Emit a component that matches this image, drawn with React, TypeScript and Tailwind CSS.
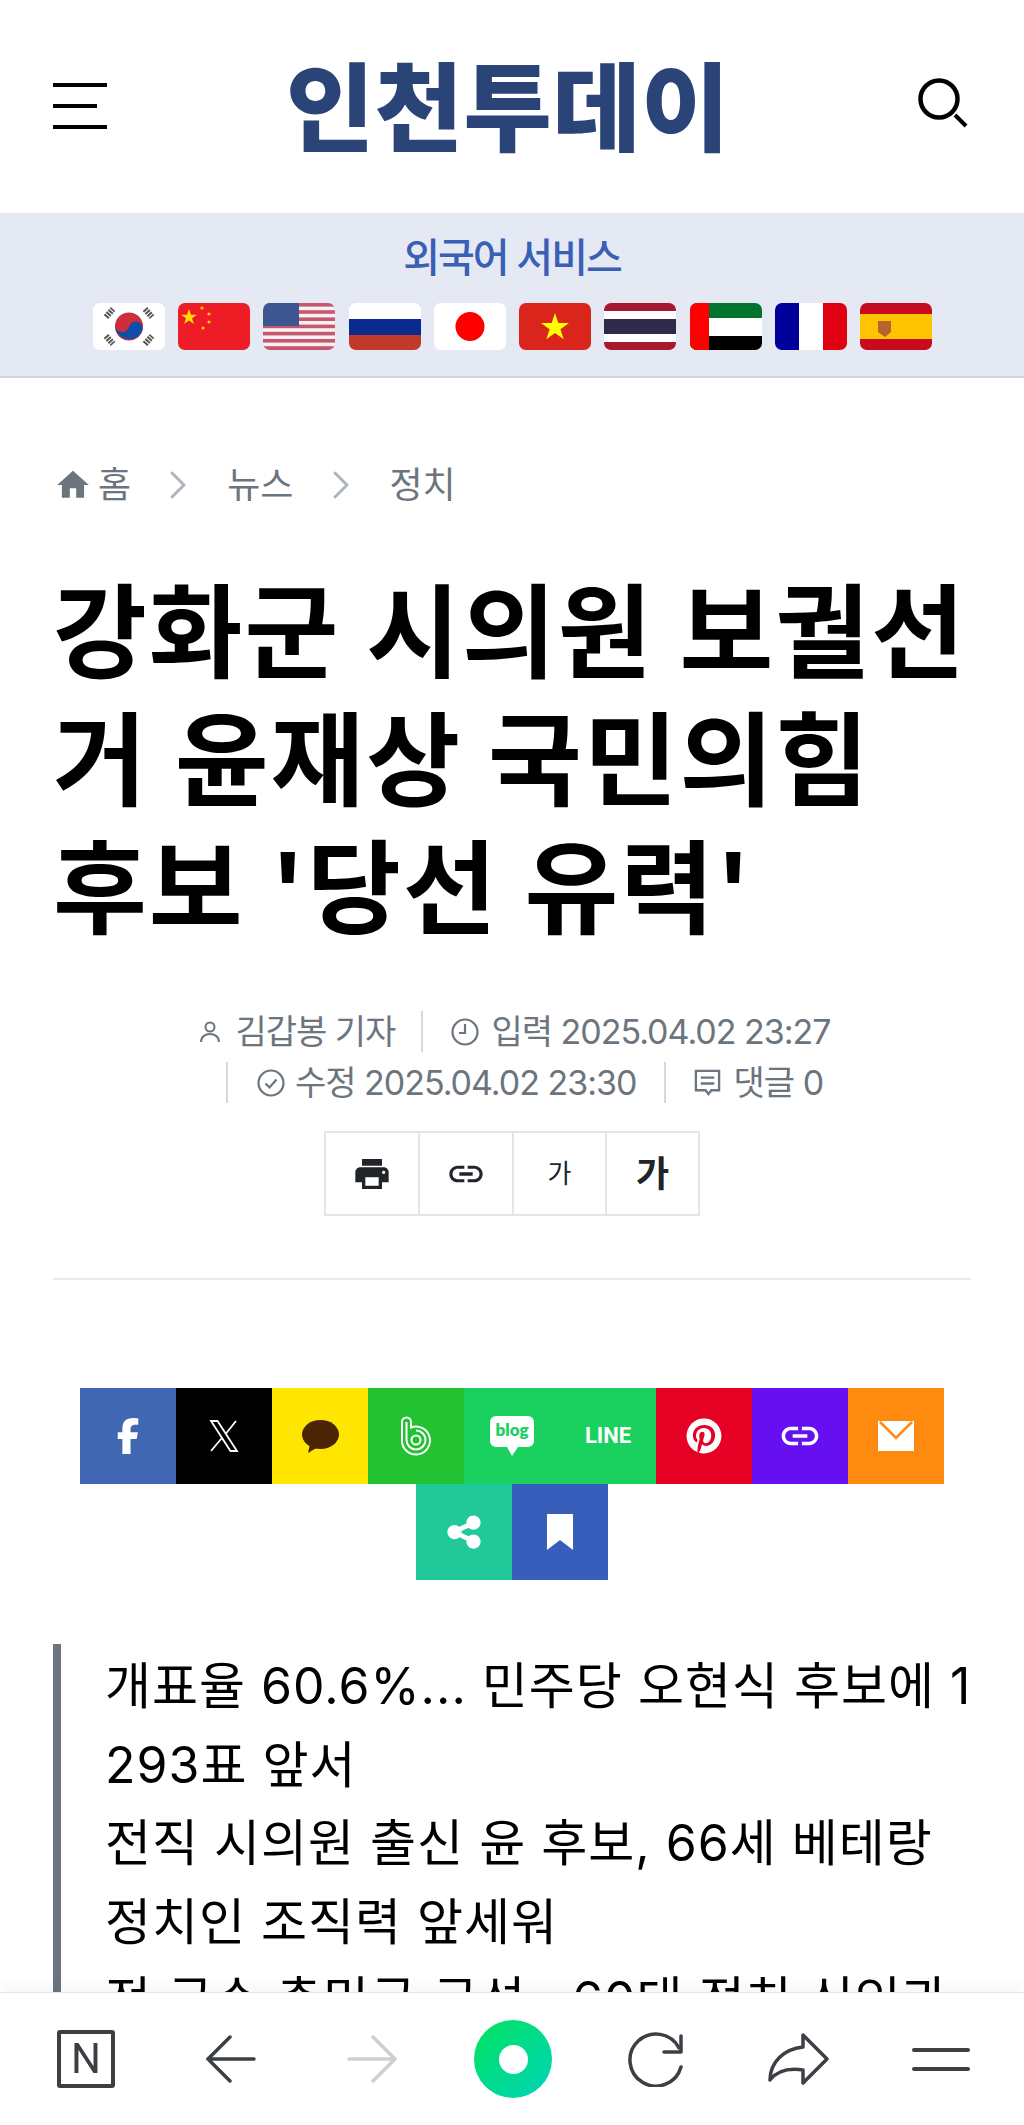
import { FaFacebookF, FaPinterest, FaShareNodes } from "react-icons/fa6";
import { MdLink, MdPrint, MdHome } from "react-icons/md";
import { ChevronRight } from "lucide-react";

const KR = "font-['Inter','Noto_Sans_CJK_KR','Noto_Sans',sans-serif]";

function Flag({ children }: { children: React.ReactNode }) {
  return (
    <svg viewBox="0 0 72 47" className="w-[72px] h-[47px] rounded-[7px] shrink-0">
      {children}
    </svg>
  );
}

function Flags() {
  return (
    <div className="flex justify-center gap-[13.3px] ml-[1px]">
      {/* korea */}
      <Flag>
        <rect width="72" height="47" fill="#fff" />
        <circle cx="36" cy="23.5" r="14" fill="#cd2e3a" />
        <path d="M22.500 20a14 14 0 0 0 27 7 6.800 6.800 0 0 0-13.500-3 6.800 6.800 0 0 1-13.500-4z" fill="#0f4ea8" />
        <g stroke="#555" strokeWidth="6" strokeDasharray="2 1">
          <path d="M13 14l7-8M52 6l7 8M13 33l7 8M52 41l7-8" />
        </g>
      </Flag>
      {/* china */}
      <Flag>
        <rect width="72" height="47" fill="#ee1c25" />
        <path d="M11 6l1.900 5.700h6l-4.900 3.600 1.900 5.700-4.900-3.500-4.900 3.500 1.900-5.700-4.900-3.600h6z" fill="#ffde00" />
        <g fill="#ffc800">
          <circle cx="24" cy="5" r="1.600" />
          <circle cx="31" cy="11" r="1.600" />
          <circle cx="31" cy="19" r="1.600" />
          <circle cx="25" cy="25" r="1.600" />
        </g>
      </Flag>
      {/* usa */}
      <Flag>
        <rect width="72" height="47" fill="#f5f0f2" />
        <g fill="#c7576f">
          <rect y="0" width="72" height="3.600" />
          <rect y="7.200" width="72" height="3.600" />
          <rect y="14.400" width="72" height="3.600" />
          <rect y="21.600" width="72" height="3.600" />
          <rect y="28.800" width="72" height="3.600" />
          <rect y="36" width="72" height="3.600" />
          <rect y="43.200" width="72" height="3.800" />
        </g>
        <rect width="36" height="23" fill="#3d5691" />
      </Flag>
      {/* russia */}
      <Flag>
        <rect width="72" height="16" fill="#fff" />
        <rect y="16" width="72" height="16" fill="#0b2a8f" />
        <rect y="32" width="72" height="15" fill="#c0392b" />
      </Flag>
      {/* japan */}
      <Flag>
        <rect width="72" height="47" fill="#fff" />
        <circle cx="36" cy="23.500" r="14.500" fill="#f00" />
      </Flag>
      {/* vietnam */}
      <Flag>
        <rect width="72" height="47" fill="#da251d" />
        <path d="M36 10l3.300 10h10.700l-8.600 6.200 3.300 10.100-8.700-6.200-8.700 6.200 3.300-10.100-8.600-6.200h10.700z" fill="#ff0" />
      </Flag>
      {/* thailand */}
      <Flag>
        <rect width="72" height="47" fill="#fff" />
        <rect width="72" height="8" fill="#a51931" />
        <rect y="16" width="72" height="15" fill="#2d2a4a" />
        <rect y="39" width="72" height="8" fill="#a51931" />
      </Flag>
      {/* uae */}
      <Flag>
        <rect width="72" height="15" fill="#00732f" />
        <rect y="15" width="72" height="18" fill="#fff" />
        <rect y="33" width="72" height="14" fill="#000" />
        <rect width="19" height="47" fill="#f00" />
      </Flag>
      {/* france */}
      <Flag>
        <rect width="24" height="47" fill="#00009a" />
        <rect x="24" width="24" height="47" fill="#fff" />
        <rect x="48" width="24" height="47" fill="#e1000f" />
      </Flag>
      {/* spain */}
      <Flag>
        <rect width="72" height="47" fill="#c60b1e" />
        <rect y="11" width="72" height="25" fill="#ffc400" />
        <path d="M18 18h13v11l-6 5-7-5z" fill="#b8632f" />
      </Flag>
    </div>
  );
}

function MetaDivider() {
  return <span className="w-[2px] h-[41px] bg-[#d5d8dc] shrink-0" />;
}

function ShareCell({ color, children }: { color: string; children: React.ReactNode }) {
  return <div className={`w-[96px] h-[96px] flex items-center justify-center text-white ${color}`}>{children}</div>;
}

export default function App() {
  return (
    <div className={`relative h-[2125px] overflow-hidden bg-white text-black ${KR}`}>
      {/* Header */}
      <header className="h-[213px] flex items-center justify-between pl-[53px] pr-[56px]">
        <div className="flex flex-col w-[54px] gap-[17px] -mt-[1px]">
          <span className="h-1 w-full bg-black" />
          <span className="h-1 w-[44px] bg-black" />
          <span className="h-1 w-full bg-black" />
        </div>
        <div className="text-[#2b4478] text-[96px] leading-none font-black tracking-[0.500px] mt-[2px] mr-[9px]">인천투데이</div>
        <svg viewBox="0 0 50 50" className="w-[50px] h-[50px] -mt-[7px]" fill="none" stroke="#000">
          <circle cx="21" cy="21" r="18.500" strokeWidth="4.500" />
          <path d="M37 37l11 11" strokeWidth="4" />
        </svg>
      </header>

      {/* Foreign language band */}
      <section className="h-[165px] bg-[#e5e9f4] border-b-2 border-[#d4d6da] flex flex-col items-center pt-[24px]">
        <div className="text-[#3a60b5] text-[40px] leading-[42px] font-medium tracking-[-2px]">외국어 서비스</div>
        <div className="mt-[24px]">
          <Flags />
        </div>
      </section>

      <main className="px-[53px]">
        {/* Breadcrumb */}
        <nav className="flex items-center h-[48px] mt-[83px] text-[#6c757d] text-[36px]">
          <MdHome className="w-[38px] h-[38px] ml-[1px] mr-[6px]" />
          <span>홈</span>
          <ChevronRight className="w-[48px] h-[48px] ml-[23px] mr-[25px] text-[#adb5bd]" strokeWidth={1.500} />
          <span>뉴스</span>
          <ChevronRight className="w-[48px] h-[48px] ml-[24px] mr-[24px] text-[#adb5bd]" strokeWidth={1.500} />
          <span>정치</span>
        </nav>

        {/* Title */}
        <h1 className="mt-[60px] text-[102px] leading-[128px] font-bold break-all tracking-[1.900px]">
          강화군 시의원 보궐선거 윤재상 국민의힘 후보 '당선 유력'
        </h1>

        {/* Meta */}
        <div className="mt-[53px] text-[#6c757d] text-[34px] tracking-[-1px]">
          <div className="flex items-center justify-center h-[51px] ml-[5px]">
            <svg viewBox="0 0 24 24" className="w-[24px] h-[24px] mr-[13px]" fill="none" stroke="currentColor" strokeWidth="2">
              <circle cx="12" cy="7" r="4.500" />
              <path d="M3 22c0-5 4-8 9-8s9 3 9 8" />
            </svg>
            <span>김갑봉 기자</span>
            <span className="ml-[26px] mr-[28px] flex"><MetaDivider /></span>
            <svg viewBox="0 0 28 28" className="w-[28px] h-[28px] mr-[12px]" fill="none" stroke="currentColor" strokeWidth="2.200">
              <circle cx="14" cy="14" r="12.500" />
              <path d="M14 6v9H8" />
            </svg>
            <span>입력 2025.04.02 23:27</span>
          </div>
          <div className="flex items-center justify-center h-[51px] ml-[25px]">
            <MetaDivider />
            <svg viewBox="0 0 28 28" className="w-[28px] h-[28px] ml-[29px] mr-[10px]" fill="none" stroke="currentColor" strokeWidth="2.200">
              <circle cx="14" cy="14" r="12.500" />
              <path d="M8.500 14.500l4 4 7-8" />
            </svg>
            <span>수정 2025.04.02 23:30</span>
            <span className="ml-[27px] mr-[27px] flex"><MetaDivider /></span>
            <svg viewBox="0 0 30 30" className="w-[29px] h-[29px] mr-[12px]" fill="none" stroke="currentColor" strokeWidth="2.400">
              <path d="M3 3h24v20H19l-3 4-3-4H3z" />
              <path d="M8 10h14M8 16h14" />
            </svg>
            <span>댓글 0</span>
          </div>
        </div>

        {/* Tools */}
        <div className="mt-[23px] flex justify-center">
          <div className="flex h-[85px] border-2 border-[#e5e5e5] text-[#212529]">
            <div className="w-[92px] flex items-center justify-center">
              <MdPrint className="w-[40px] h-[40px]" />
            </div>
            <div className="w-[94px] flex items-center justify-center border-l-2 border-[#e5e5e5]">
              <MdLink className="w-[40px] h-[40px]" />
            </div>
            <div className="w-[93px] flex items-center justify-center border-l-2 border-[#e5e5e5] text-[26px]">가</div>
            <div className="w-[93px] flex items-center justify-center border-l-2 border-[#e5e5e5] text-[36px] font-bold">가</div>
          </div>
        </div>

        <div className="mt-[62px] border-t-2 border-[#e9ecef]" />

        {/* Share buttons */}
        <div className="mt-[108px] mx-[26px] flex flex-wrap justify-center">
          <ShareCell color="bg-[#4267b2]"><FaFacebookF className="w-[24px] h-[36px]" /></ShareCell>
          <ShareCell color="bg-black">
            <svg viewBox="0 0 30 32" className="w-[30px] h-[32px]" fill="none" stroke="#fff" strokeWidth="1.800">
              <path d="M2 1h6.500L28 31h-6.500z" />
              <path d="M27 1L17 13.500M12.500 18.500L2 31" />
            </svg>
          </ShareCell>
          <ShareCell color="bg-[#ffe600]">
            <svg viewBox="0 0 37 33" className="w-[37px] h-[33px]">
              <ellipse cx="18.500" cy="14.500" rx="18.500" ry="14.500" fill="#4a2403" />
              <path d="M8 24L6 33l10-6z" fill="#4a2403" />
            </svg>
          </ShareCell>
          <ShareCell color="bg-[#22c232]">
            <svg viewBox="0 0 32 40" className="w-[32px] h-[40px]" fill="none" stroke="#fff" strokeWidth="2">
              <path d="M2 24V6a4.500 4.500 0 0 1 9 0v5.500A14 14 0 1 1 2 24z" />
              <path d="M6.500 6v18a9.500 9.500 0 1 0 9.500-9.500" />
              <circle cx="16" cy="24" r="4.500" />
            </svg>
          </ShareCell>
          <ShareCell color="bg-[#1ad15f]">
            <svg viewBox="0 0 44 40" className="w-[44px] h-[40px]">
              <path d="M6 0h32a6 6 0 0 1 6 6v19a6 6 0 0 1-6 6H28l-6 9-5-9H6a6 6 0 0 1-6-6V6a6 6 0 0 1 6-6z" fill="#fff" />
              <text x="22" y="20" textAnchor="middle" fontSize="17" fontWeight="800" fill="#1ad15f" fontFamily="Lato, sans-serif">blog</text>
            </svg>
          </ShareCell>
          <ShareCell color="bg-[#1ad15f]">
            <span className="font-['Roboto',sans-serif] text-[22px] font-bold leading-none">LINE</span>
          </ShareCell>
          <ShareCell color="bg-[#e60023]"><FaPinterest className="w-[36px] h-[36px]" /></ShareCell>
          <ShareCell color="bg-[#6610f2]"><MdLink className="w-[44px] h-[44px]" /></ShareCell>
          <ShareCell color="bg-[#ff8a10]">
            <svg viewBox="0 0 36 30" className="w-[36px] h-[30px]">
              <rect width="36" height="30" fill="#fff" />
              <path d="M2 1l16 16L34 1" fill="none" stroke="#ff8a10" strokeWidth="2.500" />
            </svg>
          </ShareCell>
          <ShareCell color="bg-[#20c997]"><FaShareNodes className="w-[38px] h-[38px]" /></ShareCell>
          <ShareCell color="bg-[#385ebb]">
            <svg viewBox="0 0 26 36" className="w-[26px] h-[36px]">
              <path d="M0 0h26v36L13 26 0 36z" fill="#fff" />
            </svg>
          </ShareCell>
        </div>

        {/* Summary */}
        <blockquote className="mt-[64px] -mr-[6px] border-l-[8px] border-[#6c757d] pl-[44px] pt-[3px] text-[50px] leading-[78.500px] tracking-[1px] break-all">
          개표율 60.6%... 민주당 오현식 후보에 1293표 앞서
          <br />
          전직 시의원 출신 윤 후보, 66세 베테랑 정치인 조직력 앞세워
          <br />
          전 군수 총민국 구성.. 60대 정치 신인과
        </blockquote>
      </main>

      {/* Browser bottom bar */}
      <div className="fixed bottom-0 inset-x-0 h-[133px] bg-white border-t border-[#e4e6e8] shadow-[0_-8px_12px_rgba(0,0,0,0.03)] flex items-center pl-[57px] text-[#3c4045]">
        <div className="w-[58px] h-[58px] border-[4px] border-[#3c4045] rounded-[3px] flex items-center justify-center font-['Roboto',sans-serif] text-[42px] leading-none">N</div>
        <svg viewBox="0 0 50 48" className="w-[50px] h-[48px] ml-[91px]" fill="none" stroke="currentColor" strokeLinecap="round" strokeWidth="3.500">
          <path d="M24 2L2 24l22 22M2 24h46" />
        </svg>
        <svg viewBox="0 0 50 48" className="w-[50px] h-[48px] ml-[91px]" fill="none" stroke="#cfcfcf" strokeLinecap="round" strokeWidth="3.500">
          <path d="M26 2l22 22-22 22M48 24H2" />
        </svg>
        <div className="w-[78px] h-[78px] ml-[77px] rounded-full bg-gradient-to-br from-[#0be25a] to-[#00d4b4] flex items-center justify-center">
          <div className="w-[29px] h-[29px] rounded-full bg-white" />
        </div>
        <svg viewBox="0 0 56 56" className="w-[56px] h-[56px] ml-[75px]" fill="none" stroke="currentColor" strokeLinecap="round" strokeLinejoin="round" strokeWidth="3.500">
          <path d="M54 36A26 26 0 1 1 52 17" />
          <path d="M54 5v16H37" />
        </svg>
        <svg viewBox="0 0 62 52" className="w-[62px] h-[52px] ml-[84px]" fill="none" stroke="currentColor" strokeLinejoin="round" strokeWidth="3.500">
          <path d="M36 2l24 24-24 24V37C22 35 10 38 3 47c0-18 14-31 33-33z" />
        </svg>
        <div className="flex flex-col gap-[15px] w-[58px] ml-[83px]">
          <span className="h-1 w-full rounded-full bg-[#3c4045]" />
          <span className="h-1 w-full rounded-full bg-[#3c4045]" />
        </div>
      </div>
    </div>
  );
}
